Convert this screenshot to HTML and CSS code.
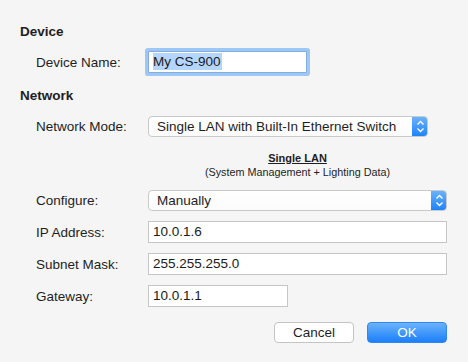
FILE: index.html
```html
<!DOCTYPE html>
<html lang="en">
<head>
    <meta charset="UTF-8">
    <title>Device Settings</title>
    <link rel="stylesheet" href="styles.css">
</head>
<body>
    <div class="dialog">
        <div class="section-title first">Device</div>
        <div class="row">
            <div class="label">Device Name:</div>
            <div class="field focused name-field"><span class="selected">My CS-900</span></div>
        </div>

        <div class="section-title">Network</div>
        <div class="row">
            <div class="label">Network Mode:</div>
            <div class="select mode-select">
                <span class="select-text">Single LAN with Built-In Ethernet Switch</span>
                <span class="select-arrow">
                    <svg width="9" height="13" viewBox="0 0 9 13"><path d="M1.5 4.5 L4.5 1.5 L7.5 4.5 M1.5 8.5 L4.5 11.5 L7.5 8.5" fill="none" stroke="#fff" stroke-width="1.4"/></svg>
                </span>
            </div>
        </div>

        <div class="mode-info">
            <div class="mode-name">Single LAN</div>
            <div class="mode-desc">(System Management + Lighting Data)</div>
        </div>

        <div class="row">
            <div class="label">Configure:</div>
            <div class="select wide">
                <span class="select-text">Manually</span>
                <span class="select-arrow">
                    <svg width="9" height="13" viewBox="0 0 9 13"><path d="M1.5 4.5 L4.5 1.5 L7.5 4.5 M1.5 8.5 L4.5 11.5 L7.5 8.5" fill="none" stroke="#fff" stroke-width="1.4"/></svg>
                </span>
            </div>
        </div>

        <div class="row field-row">
            <div class="label">IP Address:</div>
            <div class="field wide">10.0.1.6</div>
        </div>
        <div class="row field-row">
            <div class="label">Subnet Mask:</div>
            <div class="field wide">255.255.255.0</div>
        </div>
        <div class="row field-row">
            <div class="label">Gateway:</div>
            <div class="field gateway-field">10.0.1.1</div>
        </div>

        <div class="buttons">
            <div class="button">Cancel</div>
            <div class="button primary">OK</div>
        </div>
    </div>
</body>
</html>
```

FILE: styles.css
```css
body {
    margin: 0;
    background-color: #f5f5f5;
    font-family: 'Liberation Sans', Arial, sans-serif;
    font-size: 13.5px;
    color: #1e1e1e;
}

.dialog {
    width: 468px;
    height: 362px;
    padding: 24px 21px 0 20px;
    box-sizing: border-box;
}

.section-title {
    font-weight: bold;
    line-height: 16px;
    margin-top: 15px;
    margin-bottom: 12px;
}

.section-title.first {
    margin-top: 0;
    margin-bottom: 11px;
}

.row {
    display: flex;
    align-items: center;
}

.field-row {
    margin-top: 10px;
}

.label {
    width: 128px;
    padding-left: 16px;
    box-sizing: border-box;
}

.field {
    height: 22px;
    line-height: 20px;
    box-sizing: border-box;
    background: #ffffff;
    border: 1px solid #c6c6c6;
    padding-left: 4px;
    color: #1a1a1a;
}

.field.focused {
    border-color: #86acdb;
    box-shadow: 0 0 0 3px #9dc7f6;
    border-radius: 1px;
}

.name-field {
    width: 159px;
}

.selected {
    background: #b4d6fe;
    display: inline-block;
    line-height: 17px;
    padding-right: 1px;
}

.wide {
    width: 299px;
}

.gateway-field {
    width: 140px;
}

.select {
    display: flex;
    height: 21px;
    box-sizing: border-box;
    border: 1px solid #c9c9c9;
    border-radius: 4px;
    background: linear-gradient(#ffffff, #fbfbfb);
    overflow: hidden;
}

.mode-select {
    width: 280px;
}

.select-text {
    flex: 1;
    padding-left: 8px;
    line-height: 19px;
    white-space: nowrap;
}

.select-arrow {
    width: 16px;
    margin: -1px -1px -1px 0;
    display: flex;
    align-items: center;
    justify-content: center;
    background: linear-gradient(#6db5fb, #1c80fb);
}

.mode-info {
    margin: 15px 0 11px 128px;
    width: 299px;
    text-align: center;
}

.mode-name {
    font-size: 11px;
    font-weight: bold;
    text-decoration: underline;
    line-height: 13px;
}

.mode-desc {
    font-size: 10.8px;
    line-height: 14px;
}

.buttons {
    display: flex;
    justify-content: flex-end;
    gap: 13px;
    margin-top: 15px;
}

.button {
    width: 80px;
    height: 21px;
    box-sizing: border-box;
    border: 1px solid #c4c4c4;
    border-radius: 4px;
    background: #ffffff;
    text-align: center;
    line-height: 19px;
}

.button.primary {
    border-color: #2f87f4;
    background: linear-gradient(#6ab3fa, #1c7ffb);
    color: #ffffff;
}
```
